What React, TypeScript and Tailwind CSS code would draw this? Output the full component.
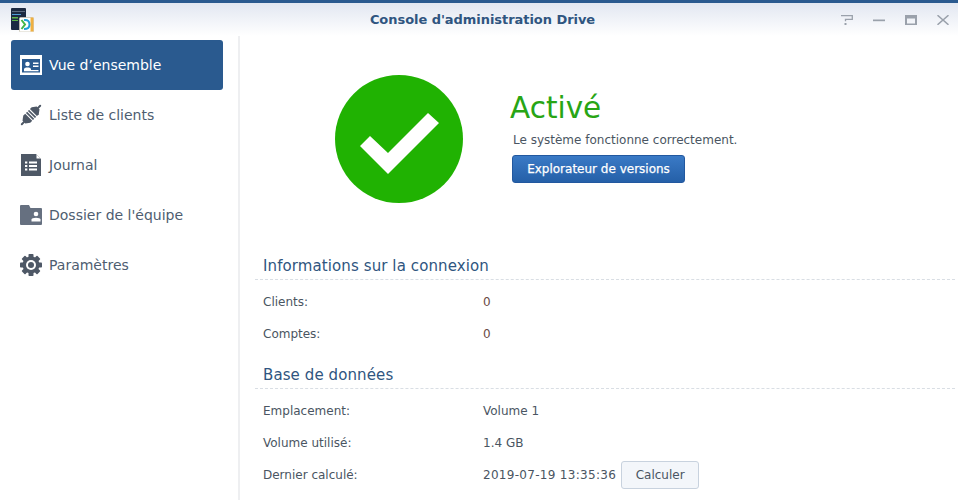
import type { ReactNode } from 'react';

function OverviewIcon() {
  return (
    <svg width="22" height="20" viewBox="0 0 22 20">
      <path fillRule="evenodd" fill="currentColor" d="M0 0h22v20H0zM2 4v13.500h18V4z" />
      <circle cx="7.500" cy="9" r="2.300" fill="currentColor" />
      <path fill="currentColor" d="M4 15.500v-1.300c0-1 1.400-1.700 3.500-1.700s3.500.7 3.500 1.700v1.300zM13 7.500h5.500v1.500H13zM13 10.500h5.500V12H13zM4 15h14.500v1.200H4z" />
    </svg>
  );
}

function PlugIcon() {
  return (
    <svg width="22" height="22" viewBox="0 0 22 22">
      <g transform="rotate(45 11 11)">
        <g fill="#4e5866">
          <rect x="10" y="-3" width="2" height="6" rx="1" />
          <path d="M9 1h4l3 4v12l-3 4H9l-3-4V5z" />
          <rect x="10" y="19" width="2" height="6" rx="1" />
        </g>
        <path fill="#fff" d="M5 7.600h12v1.100H5zM5 10.400h12v1.100H5zM5 13.200h12v1.100H5z" />
      </g>
    </svg>
  );
}

function LogIcon() {
  return (
    <svg width="20" height="22" viewBox="0 0 20 22">
      <path fill="#4e5866" d="M0 0h15l5 5v17H0z" />
      <path fill="#fff" d="M15.500 0.500l4 4h-4z" />
      <path fill="#fff" d="M4 7.500h2.300v2H4zM8 7.500h8v2H8zM4 11h2.300v2H4zM8 11h8v2H8zM4 14.500h2.300v2H4zM8 14.500h8v2H8z" />
    </svg>
  );
}

function FolderIcon() {
  return (
    <svg width="22" height="20" viewBox="0 0 22 20">
      <path fill="#667080" d="M1 0h8l1.500 3H21a1 1 0 0 1 1 1v15a1 1 0 0 1-1 1H1a1 1 0 0 1-1-1V1a1 1 0 0 1 1-1z" />
      <circle cx="16" cy="9" r="2.300" fill="#fff" />
      <path fill="#fff" d="M11.500 16.500V14.500c0-1 2-1.800 4.500-1.800s4.500.8 4.500 1.800v2z" />
    </svg>
  );
}

function GearIcon() {
  return (
    <svg width="22" height="22" viewBox="0 0 22 22">
      <g fill="#4e5866">
        <circle cx="11" cy="11" r="8.500" />
        {[0, 45, 90, 135, 180, 225, 270, 315].map((angle) => (
          <rect key={angle} x="8.500" y="0" width="5" height="4" rx="0.800" transform={`rotate(${angle} 11 11)`} />
        ))}
      </g>
      <circle cx="11" cy="11" r="5" fill="#fff" />
      <circle cx="11" cy="11" r="3" fill="#4e5866" />
    </svg>
  );
}

function AppLogo() {
  return (
    <svg width="23" height="24" viewBox="0 0 23 24">
      <rect x="0" y="0" width="15" height="22" rx="1" fill="#1c2a42" />
      <rect x="1" y="3" width="13" height="1" fill="#5d6b80" />
      <rect x="1" y="6" width="9" height="1" fill="#4e9bd6" />
      <rect x="1" y="9" width="6" height="1.500" fill="#5fb548" />
      <rect x="1" y="12" width="6" height="1" fill="#5fb548" />
      <rect x="8.500" y="9.500" width="14" height="14.500" rx="1" fill="#fff" stroke="#c9c4b4" strokeWidth="0.800" />
      <path d="M19.500 9.500h3v14h-3z" fill="#f0b040" />
      <path d="M10.500 12l3.500 4.500-3.500 4.500" fill="none" stroke="#42b649" strokeWidth="2" />
      <path d="M13 12c4-.5 5.500 1.500 5.500 4.500s-1.500 4.500-5.500 4.500" fill="none" stroke="#1f9fd8" strokeWidth="2" />
    </svg>
  );
}

function WindowButtons() {
  return (
    <div className="flex items-center justify-end text-[#9aa1ab]">
      <svg className="mr-[20px]" width="12" height="10" viewBox="0 0 12 10">
        <path fill="none" stroke="currentColor" strokeWidth="1.300" d="M0 .700h11.300v3.600H4.500v2" />
        <rect x="3.500" y="8" width="2" height="2" fill="currentColor" />
      </svg>
      <svg className="mr-[20px]" width="12" height="10" viewBox="0 0 12 10">
        <rect x="0" y="4.500" width="12" height="1.700" fill="currentColor" />
      </svg>
      <svg className="mr-[20px]" width="12" height="10" viewBox="0 0 12 10">
        <path fillRule="evenodd" fill="currentColor" d="M0 0h12v10H0zM2 3.500v5h8v-5z" />
      </svg>
      <svg className="mr-[9px]" width="12" height="10" viewBox="0 0 12 10">
        <path stroke="currentColor" strokeWidth="1.500" d="M.5.200l11 9.600M11.500.200L.5 9.800" />
      </svg>
    </div>
  );
}

const navItems: { label: string; icon: ReactNode; active?: boolean }[] = [
  { label: 'Vue d’ensemble', icon: <OverviewIcon />, active: true },
  { label: 'Liste de clients', icon: <PlugIcon /> },
  { label: 'Journal', icon: <LogIcon /> },
  { label: "Dossier de l'équipe", icon: <FolderIcon /> },
  { label: 'Paramètres', icon: <GearIcon /> },
];

function Section({ title, children }: { title: string; children: ReactNode }) {
  return (
    <section>
      <h2 className="h-[31px] border-b border-dashed border-[#d9dee4] pt-[4px] pl-2 text-[15px] leading-[26px] tracking-[0.1px] text-[#2f5580]">{title}</h2>
      <div className="pt-[6px] pl-2">{children}</div>
    </section>
  );
}

function Row({ label, value, accent, wide, children }: { label: string; value: string; accent?: boolean; wide?: boolean; children?: ReactNode }) {
  return (
    <div className="flex h-8 items-center text-[12px]">
      <span className="w-[220px] text-[#4a5562]">{label}</span>
      <span className={accent ? 'text-[#6b4a45]' : wide ? 'tracking-[0.3px] text-[#4a5562]' : 'text-[#4a5562]'}>{value}</span>
      {children}
    </div>
  );
}

export default function App() {
  return (
    <div className="flex h-[500px] w-[958px] flex-col overflow-hidden bg-white font-['DejaVu_Sans',sans-serif]">
      <header className="grid h-[36px] shrink-0 grid-cols-[1fr_auto_1fr] items-center border-t-[3px] border-[#2a5a8f] bg-gradient-to-b from-[#e2e7f1] to-white pl-[11px]">
        <AppLogo />
        <h1 className="pr-[4px] text-[13px] font-bold tracking-[-0.05px] text-[#2f5580]">Console d'administration Drive</h1>
        <WindowButtons />
      </header>

      <div className="flex min-h-0 flex-1">
        <aside className="w-[240px] shrink-0 border-r-2 border-[#eeeff1] pt-1 pl-[11px]">
          {navItems.map((item) => (
            <div
              key={item.label}
              className={
                item.active
                  ? 'flex h-[50px] w-[212px] items-center rounded-[3px] bg-[#2a5a8f] text-white'
                  : 'flex h-[50px] w-[212px] items-center text-[#4e5d70]'
              }
            >
              <span className="flex w-[38px] justify-center pl-[2px]">{item.icon}</span>
              <span className="text-[14px]">{item.label}</span>
            </div>
          ))}
        </aside>

        <main className="min-w-0 flex-1 pr-[3px] pl-[15px]">
          <div className="flex h-[204px] pt-[39px] pl-[80px]">
            <svg className="shrink-0" width="128" height="128" viewBox="0 0 128 128">
              <circle cx="64" cy="64" r="64" fill="#20b202" />
              <path fill="#fff" d="M25 71l10-10 18 17 40-40 11 10-51 51z" />
            </svg>
            <div className="pl-[48px]">
              <div className="mt-[15px] -ml-px text-[29.500px] leading-[36px] text-[#28a515]">Activé</div>
              <p className="mt-[5px] pl-[2px] text-[12px] text-[#4a5562]">Le système fonctionne correctement.</p>
              <button className="mt-[6px] ml-[1px] h-[28px] w-[173px] rounded-[3px] border border-[#22589f] bg-gradient-to-b from-[#3a7ac6] to-[#2560a8] text-[12px] text-white [-webkit-text-stroke:0.25px_white]">
                Explorateur de versions
              </button>
            </div>
          </div>

          <div className="mt-[9px]">
            <Section title="Informations sur la connexion">
              <Row label="Clients:" value="0" accent />
              <Row label="Comptes:" value="0" accent />
            </Section>
          </div>
          <div className="mt-[8px]">
            <Section title="Base de données">
              <Row label="Emplacement:" value="Volume 1" />
              <Row label="Volume utilisé:" value="1.4 GB" />
              <Row label="Dernier calculé:" value="2019-07-19 13:35:36" wide>
                <button className="ml-[5px] h-[28px] w-[78px] rounded-[3px] border border-[#c8d2de] bg-[#f3f6fa] text-[12px] text-[#4a5562]">Calculer</button>
              </Row>
            </Section>
          </div>
        </main>
      </div>
    </div>
  );
}
